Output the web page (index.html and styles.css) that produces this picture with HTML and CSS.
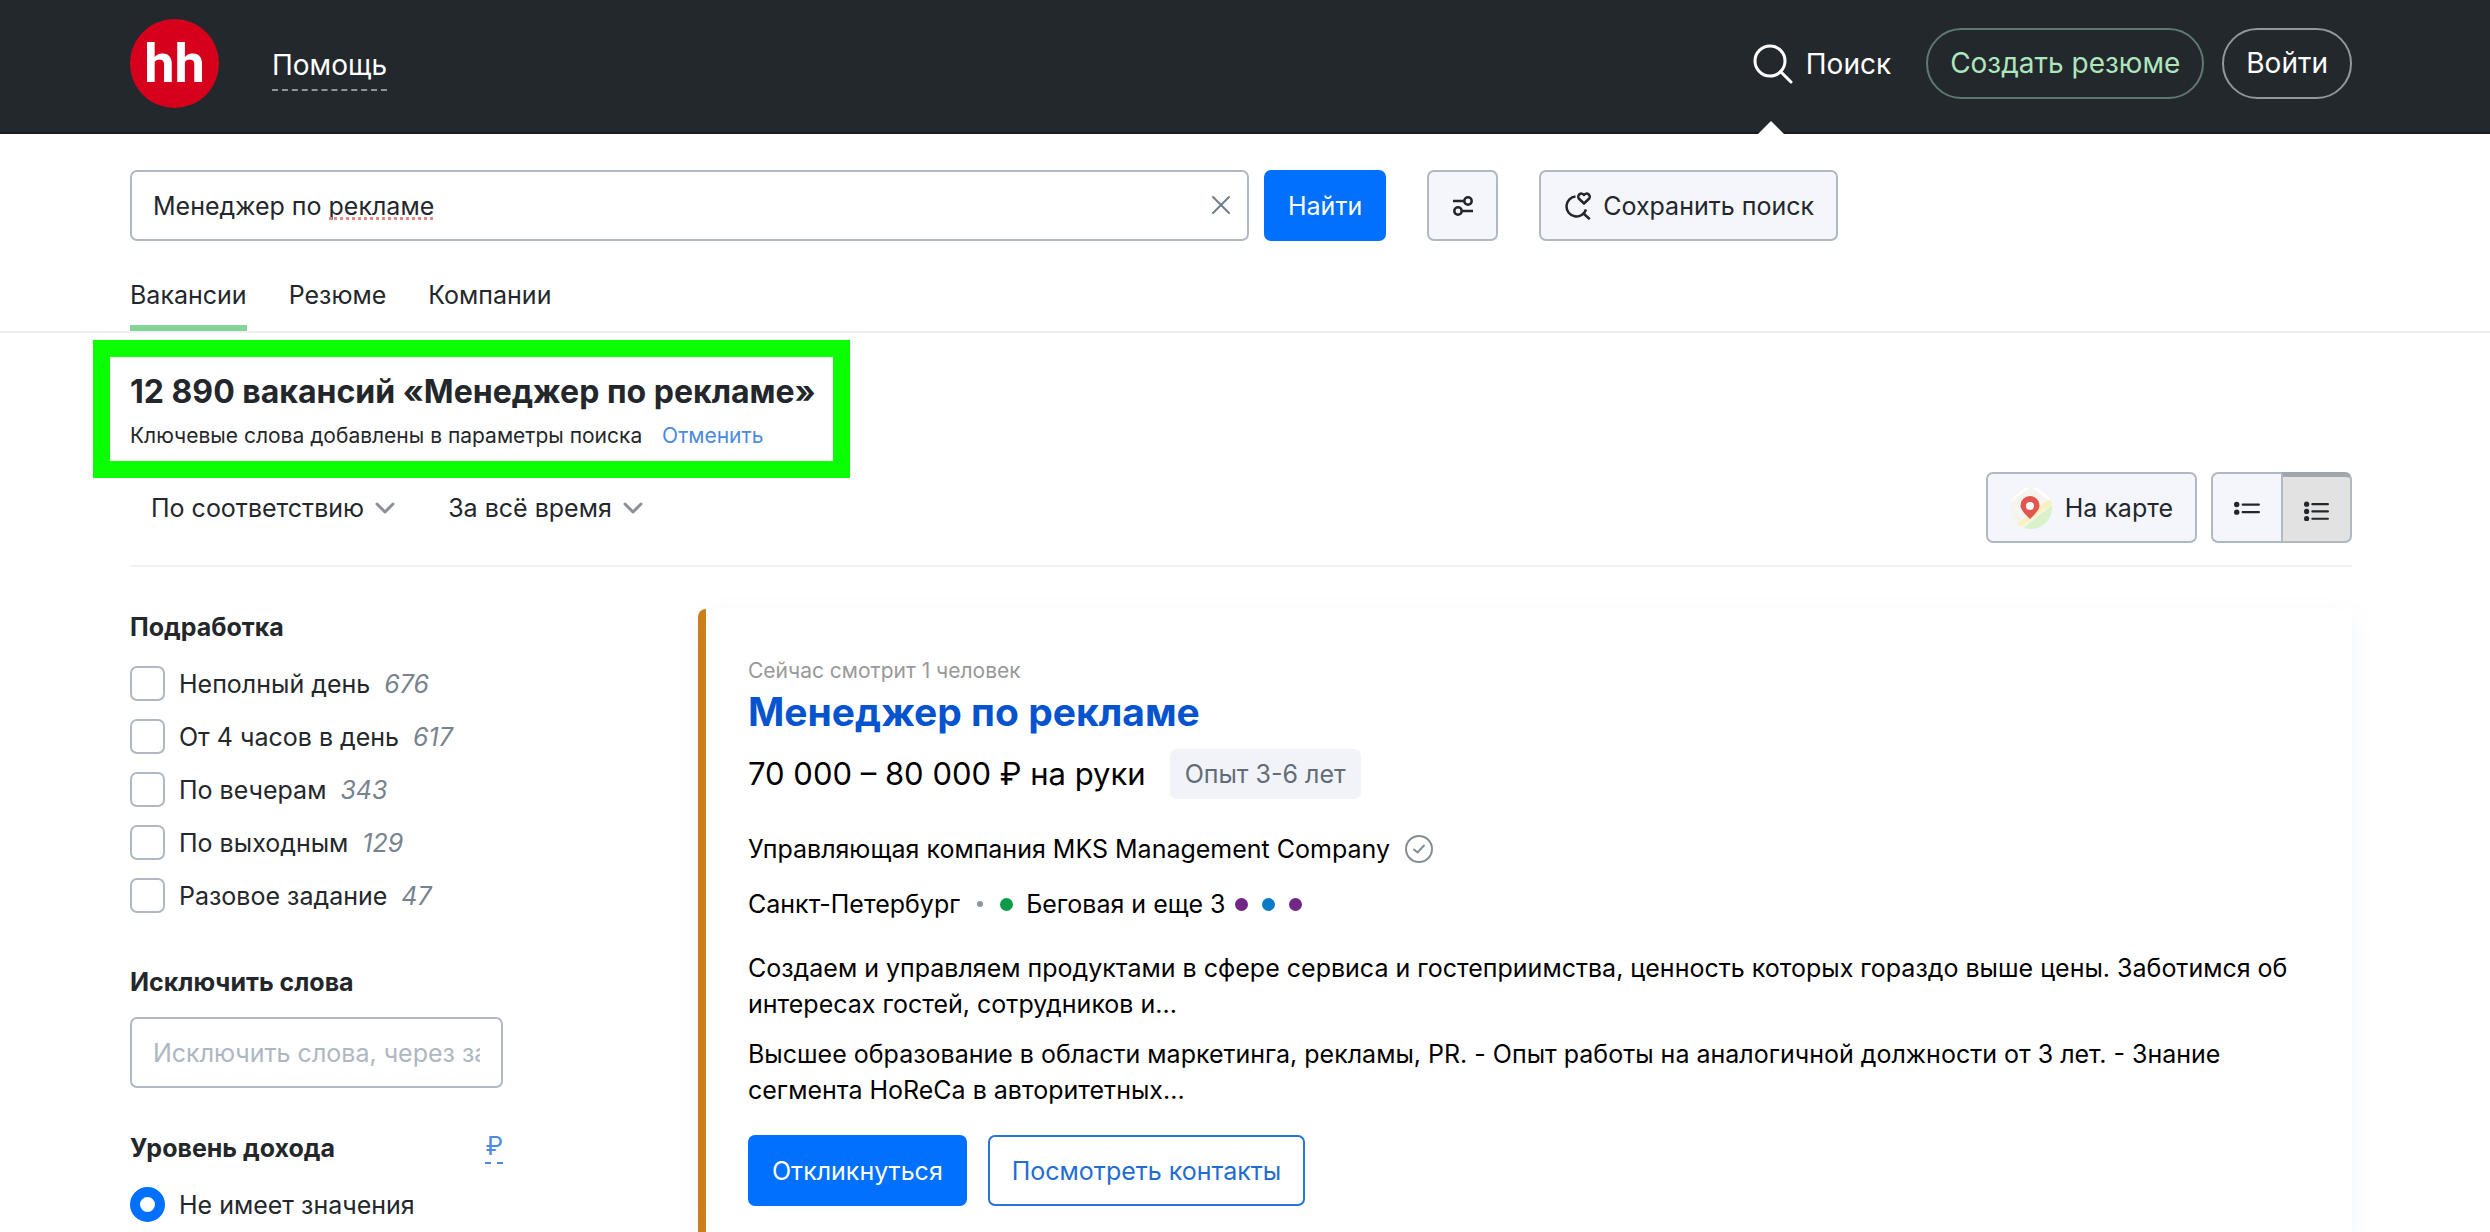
FILE: index.html
```
<!DOCTYPE html>
<html lang="ru">
<head>
<meta charset="utf-8">
<meta name="viewport" content="width=device-width, initial-scale=1">
<title>Менеджер по рекламе — поиск вакансий</title>
<link rel="stylesheet" href="styles.css">
</head>
<body>
<header class="header">
  <a class="logo" href="#">hh</a>
  <a class="help" href="#">Помощь</a>
  <nav class="header-nav">
    <a class="header-search" href="#">
      <svg class="icon-search" viewBox="0 0 40 40" fill="none" stroke="currentColor" stroke-width="3" stroke-linecap="round"><circle cx="17" cy="17" r="15"/><path d="M27.500 27.500 38 38"/></svg>
      <span>Поиск</span>
    </a>
    <a class="pill pill-green" href="#">Создать резюме</a>
    <a class="pill" href="#">Войти</a>
  </nav>
</header>

<section class="search">
  <form class="search-row">
    <div class="search-field">
      <input class="text-input" type="text" value="Менеджер по рекламе" aria-label="Поисковый запрос">
      <span class="spelling" aria-hidden="true"></span>
      <button class="clear" type="button" aria-label="Очистить">
        <svg viewBox="0 0 20 20" fill="none" stroke="currentColor" stroke-width="2" stroke-linecap="round"><path d="M2 2 18 18M18 2 2 18"/></svg>
      </button>
    </div>
    <button class="btn btn-primary" type="button">Найти</button>
    <button class="btn btn-soft btn-icon" type="button" aria-label="Расширенный поиск">
      <svg class="icon-filter" viewBox="0 0 20 20" fill="none" stroke="currentColor" stroke-width="2.500"><path d="M0 5H11M9 15H20"/><circle cx="15" cy="5" r="3.700"/><circle cx="5" cy="15" r="3.700"/></svg>
    </button>
    <button class="btn btn-soft btn-save" type="button">
      <svg class="icon-save" viewBox="0 0 26 28" fill="none" stroke="currentColor" stroke-width="2.500"><path d="M10.500 4.500A10 10 0 1 0 21 17.500"/><path d="M18.500 21.500 24 26.500" stroke-linecap="round"/><path d="M19 11.500 13.800 6.500A2.800 2.800 0 0 1 19 3 2.800 2.800 0 0 1 24.200 6.500Z" stroke-linejoin="round"/></svg>
      <span>Сохранить поиск</span>
    </button>
  </form>
  <nav class="tabs">
    <a class="tab tab-active" href="#">Вакансии</a>
    <a class="tab" href="#">Резюме</a>
    <a class="tab" href="#">Компании</a>
  </nav>
</section>

<main class="results">
  <div class="results-head">
    <h1 class="results-title">12 890 вакансий «Менеджер по рекламе»</h1>
    <p class="results-note">Ключевые слова добавлены в параметры поиска <a class="undo" href="#">Отменить</a></p>
    <span class="marker" aria-hidden="true"></span>
  </div>
  <div class="toolbar">
    <button class="drop" type="button">По соответствию
      <svg class="icon-chevron" viewBox="0 0 20 12" fill="none" stroke="currentColor" stroke-width="3" stroke-linecap="round" stroke-linejoin="round"><path d="M2 2 10 10 18 2"/></svg>
    </button>
    <button class="drop" type="button">За всё время
      <svg class="icon-chevron" viewBox="0 0 20 12" fill="none" stroke="currentColor" stroke-width="3" stroke-linecap="round" stroke-linejoin="round"><path d="M2 2 10 10 18 2"/></svg>
    </button>
    <button class="btn btn-soft btn-map" type="button">
      <svg class="icon-map" viewBox="0 0 42 42"><defs><clipPath id="disc"><circle cx="21" cy="21" r="21"/></clipPath></defs><g clip-path="url(#disc)"><path fill="#f5f4ee" d="M0 0H42V42H0Z"/><path stroke="#fff" stroke-width="3" d="M0 14 18 0M24 0 42 14"/><path fill="#d9f2c9" d="M12 42 42 18V42Z"/><path stroke="#fbf0bd" stroke-width="5" d="M4 42 44 12"/></g><path fill="#e35650" d="M20 32C14 26 10.500 22.500 10.500 18.500A9.500 9.500 0 0 1 29.500 18.500C29.500 22.500 26 26 20 32Z"/><circle cx="20" cy="19" r="4" fill="#fff"/></svg>
      <span>На карте</span>
    </button>
    <div class="toggle">
      <button class="toggle-item" type="button" aria-label="Краткий список">
        <svg viewBox="0 0 24 20" fill="none" stroke="currentColor" stroke-width="2" stroke-linecap="round"><path d="M8 7H23M8 14H23"/><g fill="currentColor" stroke="none"><circle cx="2.500" cy="7" r="2.500"/><circle cx="2.500" cy="14" r="2.500"/></g></svg>
      </button>
      <button class="toggle-item toggle-on" type="button" aria-label="Подробный список" aria-pressed="true">
        <svg viewBox="0 0 24 20" fill="none" stroke="currentColor" stroke-width="2" stroke-linecap="round"><path d="M8 3H23M8 10H23M8 17H23"/><g fill="currentColor" stroke="none"><circle cx="2.500" cy="3" r="2.500"/><circle cx="2.500" cy="10" r="2.500"/><circle cx="2.500" cy="17" r="2.500"/></g></svg>
      </button>
    </div>
  </div>

  <div class="columns">
    <aside class="filters">
      <section class="group">
        <h2 class="group-title">Подработка</h2>
        <label class="option"><input class="check" type="checkbox"><span>Неполный день</span><em class="count">676</em></label>
        <label class="option"><input class="check" type="checkbox"><span>От 4 часов в день</span><em class="count">617</em></label>
        <label class="option"><input class="check" type="checkbox"><span>По вечерам</span><em class="count">343</em></label>
        <label class="option"><input class="check" type="checkbox"><span>По выходным</span><em class="count">129</em></label>
        <label class="option"><input class="check" type="checkbox"><span>Разовое задание</span><em class="count">47</em></label>
      </section>
      <section class="group">
        <h2 class="group-title"><label for="exclude">Исключить слова</label></h2>
        <input class="text-input exclude" id="exclude" type="text" placeholder="Исключить слова, через запятую">
      </section>
      <section class="group">
        <div class="group-head">
          <h2 class="group-title">Уровень дохода</h2>
          <a class="currency" href="#">₽</a>
        </div>
        <label class="option"><input class="radio" type="radio" name="income" checked><span>Не имеет значения</span></label>
      </section>
    </aside>

    <article class="card">
      <p class="watching">Сейчас смотрит 1 человек</p>
      <h2 class="card-title"><a href="#">Менеджер по рекламе</a></h2>
      <div class="pay">
        <span class="salary">70 000 – 80 000 ₽ на руки</span>
        <span class="badge">Опыт 3-6 лет</span>
      </div>
      <p class="company">
        <a href="#">Управляющая компания MKS Management Company</a>
        <svg class="icon-ok" viewBox="0 0 30 30" fill="none" stroke="currentColor" stroke-width="2" stroke-linecap="round" stroke-linejoin="round"><circle cx="15" cy="15" r="13"/><path d="M10 15.500 13.500 18.500 20 11.500"/></svg>
      </p>
      <p class="place">
        <span>Санкт-Петербург</span>
        <i class="sep"></i>
        <i class="dot dot-green"></i>
        <span>Беговая и еще 3</span>
        <i class="dot dot-purple"></i>
        <i class="dot dot-blue"></i>
        <i class="dot dot-purple"></i>
      </p>
      <div class="desc">
        <p>Создаем и управляем продуктами в сфере сервиса и гостеприимства, ценность которых гораздо выше цены. Заботимся об интересах гостей, сотрудников и...</p>
        <p>Высшее образование в области маркетинга, рекламы, PR. - Опыт работы на аналогичной должности от 3 лет. - Знание сегмента HoReCa в авторитетных...</p>
      </div>
      <div class="actions">
        <button class="btn btn-primary" type="button">Откликнуться</button>
        <button class="btn btn-outline" type="button">Посмотреть контакты</button>
      </div>
    </article>
  </div>
</main>
</body>
</html>
```
FILE: styles.css
```
* { box-sizing: border-box; }
body {
  margin: 0;
  background: #fff;
  color: #23272b;
  font: 400 25px/36px Inter, "Liberation Sans", sans-serif;
}
h1, h2, p { margin: 0; }
a { color: inherit; text-decoration: none; }
button, input { font: inherit; color: inherit; }
button { cursor: pointer; }
svg { display: block; flex: none; }

/* header */
.header {
  display: flex;
  align-items: center;
  min-height: 134px;
  padding: 0 138px 5px 130px;
  background: #23282c;
  border-bottom: 2px solid #1b1c21;
  color: #fff;
  font-size: 28px;
}
.logo {
  width: 89px;
  height: 89px;
  border-radius: 50%;
  background: #d6001c;
  font: 700 54px/89px Roboto, sans-serif;
  text-align: center;
}
.help {
  margin-left: 53px;
  padding-top: 4px;
  line-height: 48px;
  border-bottom: 2px dashed #90959a;
}
.header-nav {
  display: flex;
  align-items: center;
  gap: 18px;
  margin-left: auto;
}
.header-search {
  position: relative;
  display: flex;
  align-items: center;
  gap: 13px;
  margin-right: 17px;
}
.header-search::after {
  content: "";
  position: absolute;
  left: 4px;
  top: 77px;
  border: 14px solid transparent;
  border-top: 0;
  border-bottom-color: #fff;
}
.icon-search { width: 40px; height: 40px; }
.pill {
  padding: 0 22px;
  border: 2px solid #92979b;
  border-radius: 36px;
  line-height: 67px;
}
.pill-green { border-color: #5f7873; color: #aee5bd; }

/* search */
.search {
  padding: 36px 138px 0 130px;
  border-bottom: 2px solid #eeeff0;
}
.search-row { display: flex; }
.search-field {
  position: relative;
  flex: 0 1 1119px;
  margin-right: 15px;
}
.text-input {
  display: block;
  width: 100%;
  height: 71px;
  padding: 0 21px;
  border: 2px solid #b0b9c2;
  border-radius: 7px;
  background: #fff;
}
.text-input::placeholder { color: #adb7c2; opacity: 1; }
.spelling {
  position: absolute;
  left: 199px;
  top: 47px;
  width: 104px;
  border-bottom: 3px dotted #e58a86;
}
.clear {
  position: absolute;
  right: 18px;
  top: 25px;
  width: 20px;
  height: 20px;
  padding: 0;
  border: 0;
  background: none;
  color: #6f7e8c;
}
.btn {
  display: flex;
  align-items: center;
  justify-content: center;
  height: 71px;
  padding: 0 22px;
  border: 2px solid #b0b9c2;
  border-radius: 7px;
  white-space: nowrap;
}
.btn-primary { background: #0070ff; border-color: #0070ff; color: #fff; }
.btn-soft { background: #f4f6fc; }
.btn-outline { background: #fff; border-color: #2a74d8; color: #1f6dd2; }
.btn-icon { width: 71px; margin: 0 41px; }
.icon-filter { width: 20px; height: 20px; }
.btn-save { gap: 12px; padding-left: 24px; }
.icon-save { width: 26px; height: 28px; }

.tabs { display: flex; gap: 42px; margin-top: 36px; }
.tab { padding-bottom: 12px; border-bottom: 6px solid transparent; }
.tab-active { border-color: #85d398; }

/* results */
.results { padding: 39px 138px 0 130px; }
.results-head { position: relative; width: fit-content; }
.results-title { font-size: 32px; line-height: 40px; }
.results-note { margin-top: 6px; font-size: 21px; }
.undo { margin-left: 14px; color: #4a8ae0; }
.marker {
  position: absolute;
  inset: -32px -34px -24px -37px;
  border: 17px solid #0aff00;
  pointer-events: none;
}
.toolbar {
  display: flex;
  align-items: center;
  margin-top: 18px;
  padding-bottom: 22px;
  border-bottom: 2px solid #f0f1f2;
}
.drop {
  display: flex;
  align-items: center;
  gap: 11px;
  margin-right: 11px;
  padding: 0 21px;
  border: 0;
  background: none;
}
.icon-chevron { width: 20px; height: 12px; color: #8b9197; }
.btn-map { gap: 13px; margin: 0 14px 0 auto; }
.icon-map { width: 42px; height: 42px; }
.toggle { display: flex; }
.toggle-item {
  width: 70px;
  height: 71px;
  padding: 0 21px;
  border: 2px solid #b0b9c2;
  border-right: 0;
  border-radius: 7px 0 0 7px;
  background: #f4f6fc;
}
.toggle-item.toggle-on {
  width: 71px;
  padding-top: 4px;
  border-right: 2px solid #b0b9c2;
  border-top: 5px solid #a1a6ab;
  border-radius: 0 7px 7px 0;
  background: #e2e2e2;
}

.columns {
  display: grid;
  grid-template-columns: 373px minmax(0, 1fr);
  gap: 195px;
  margin-top: 42px;
}
.group { margin-bottom: 42px; }
.group:last-child { margin-bottom: 0; }
.group-title { margin-bottom: 12px; font-size: 25px; line-height: 36px; }
.group-head { display: flex; justify-content: space-between; align-items: flex-start; }
.currency {
  border-bottom: 2px dashed #4a8ae0;
  color: #4a8ae0;
  line-height: 32px;
}
.exclude { margin-top: 17px; }
.option { display: flex; align-items: center; height: 53px; }
.check, .radio {
  appearance: none;
  flex: none;
  width: 35px;
  height: 35px;
  margin: 0 14px 0 0;
  border: 2px solid #b0b9c2;
  border-radius: 7px;
  background: #fff;
}
.radio:checked { border: 10px solid #0070ff; border-radius: 50%; }
.count { margin-left: 14px; color: #77838f; }

/* vacancy card */
.card {
  padding: 47px 42px 26px;
  border-left: 8px solid #cc7e1a;
  border-radius: 8px 0 0 0;
  box-shadow: 0 8px 24px rgba(90, 120, 200, .08);
  color: #000;
}
.watching { color: #999; font-size: 21px; line-height: 30px; }
.card-title { margin-top: 3px; font-size: 39px; line-height: 46px; color: #0553cf; }
.pay { display: flex; align-items: center; gap: 24px; margin-top: 14px; font-size: 31px; }
.badge {
  padding: 0 15px;
  border-radius: 7px;
  background: #f2f3f8;
  color: #626c78;
  font-size: 25px;
  line-height: 50px;
}
.company { display: flex; align-items: center; gap: 14px; margin-top: 32px; }
.icon-ok { width: 30px; height: 30px; color: #848d96; }
.place { display: flex; align-items: center; margin-top: 19px; }
.sep { width: 6px; height: 6px; margin: 0 17px; border-radius: 50%; background: #8d949b; }
.dot { width: 13px; height: 13px; margin-left: 14px; border-radius: 50%; }
.dot-green { margin: 0 13px 0 0; background: #0d9b49; }
.dot-purple { background: #702785; }
.dot-blue { background: #0a7bc4; }
.place span + .dot { margin-left: 9px; }
.desc { display: grid; gap: 14px; margin-top: 28px; }
.actions { display: flex; gap: 21px; margin-top: 27px; }
```
